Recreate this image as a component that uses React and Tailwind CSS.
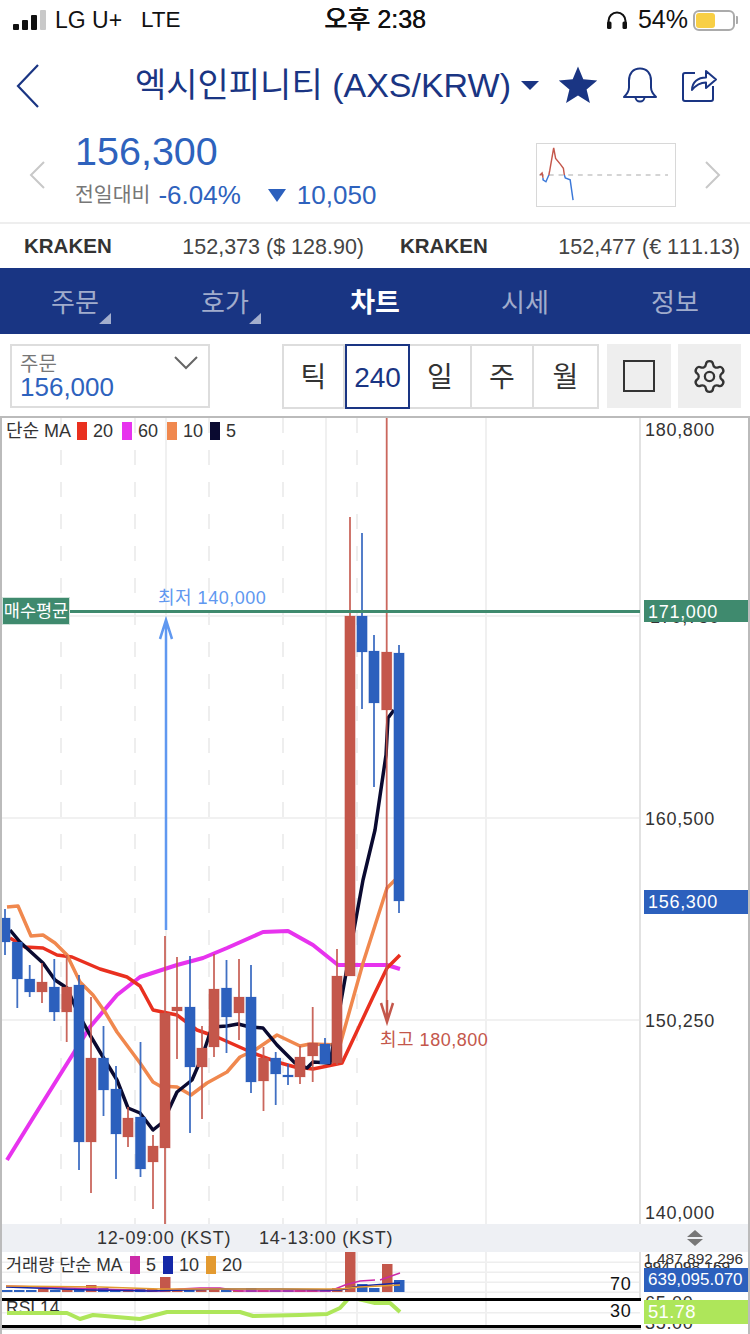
import React from "react";
import { Settings } from "lucide-react";

const NAVY = "#1a3583";
const BLUE = "#2c60bd";
const RED = "#c4574b";

// [center x, wick top, wick bottom, body top, body bottom, color]
const candles = [
  [5, 909, 955, 918, 942, BLUE],
  [17.3, 942, 1008, 942, 979, BLUE],
  [29.7, 965, 997, 979, 992, BLUE],
  [42, 963, 1003, 982, 992, RED],
  [54.3, 959, 1021, 987, 1012, BLUE],
  [66.7, 955, 1042, 987, 1012, RED],
  [79, 975, 1170, 985, 1142, BLUE],
  [91, 997, 1193, 1058, 1142, RED],
  [103.5, 1026, 1116, 1058, 1090, BLUE],
  [116, 1066, 1179, 1089, 1134, BLUE],
  [128, 1107, 1147, 1118, 1137, RED],
  [140.5, 1042, 1177, 1117, 1169, BLUE],
  [153, 1135, 1209, 1146, 1162, RED],
  [165, 936, 1224, 1013, 1148, RED],
  [177, 957, 1059, 1007, 1011, RED],
  [190, 956, 1133, 1007, 1067, BLUE],
  [202, 1026, 1119, 1048, 1067, RED],
  [214, 954, 1057, 989, 1047, RED],
  [226.5, 960, 1053, 988, 1017, BLUE],
  [239, 959, 1040, 997, 1013, RED],
  [251, 965, 1093, 997, 1082, BLUE],
  [263.5, 1047, 1111, 1058, 1081, RED],
  [275.7, 1052, 1105, 1058, 1074, BLUE],
  [288, 1064, 1085, 1075, 1077, BLUE],
  [300, 1046, 1084, 1057, 1077, RED],
  [312.7, 1007, 1082, 1043, 1056, RED],
  [325, 1038, 1064, 1044, 1064, BLUE],
  [337, 949, 1065, 976, 1063, RED],
  [350, 517, 976, 616, 976, RED],
  [362, 533, 709, 616, 652, BLUE],
  [374, 635, 787, 651, 703, BLUE],
  [386.7, 418, 1000, 652, 710, RED],
  [399, 645, 913, 653, 901, BLUE],
];

const black = "10,930 20,942 43,963 55,980 67,988 78,1013 90,1035 103,1057 117,1080 128,1108 140,1113 153,1130 163,1122 177,1092 192,1080 202,1057 212,1027 227,1026 238,1024 250,1027 263,1028 277,1045 295,1063 307,1068 313,1062 330,1063 343,990 363,880 375,830 386,755 388,718 394,710";
const orange = "7,907 18,906 31,936 43,935 55,943 67,955 80,982 93,995 105,1012 117,1032 140,1063 153,1082 160,1086 177,1087 191,1095 207,1083 227,1072 240,1057 255,1050 277,1035 300,1046 310,1044 340,1045 363,963 387,888 395,880";
const red = "10,938 25,947 43,948 57,955 72,957 100,969 127,977 140,986 153,1010 177,1015 197,1030 217,1037 253,1053 277,1062 295,1067 313,1069 342,1063 373,997 387,968 400,955";
const magenta = "7,1160 33,1118 63,1070 90,1027 117,995 140,977 177,965 203,958 227,948 263,932 288,931 313,945 338,965 387,965 400,969";
const rsi = "7,1313 67,1313 80,1319 93,1315 140,1319 167,1312 187,1312 213,1312 240,1312 253,1316 300,1315 327,1314 340,1308 350,1297 375,1303 390,1303 400,1312";

const volumes = [
  [2, 1290, BLUE], [14, 1290, BLUE], [26, 1290, BLUE], [38, 1289, RED], [50, 1290, BLUE], [62, 1289, RED],
  [74, 1288, BLUE], [86, 1285, RED], [98, 1288, BLUE], [110, 1289, BLUE], [123, 1289, RED], [135, 1289, BLUE],
  [147, 1289, RED], [160, 1277, RED], [172, 1289, RED], [184, 1290, BLUE], [196, 1290, RED], [209, 1288, RED],
  [221, 1289, BLUE], [233, 1290, RED], [246, 1288, BLUE], [258, 1290, RED], [270, 1290, BLUE], [283, 1290, BLUE],
  [295, 1290, RED], [307, 1290, RED], [320, 1290, BLUE], [332, 1288, RED], [345, 1252, RED], [357, 1284, BLUE],
  [369, 1288, BLUE], [382, 1264, RED], [394, 1280, BLUE],
];

const dashedX = [61, 135, 209, 283, 357];
const solidX = [166, 326, 486];

const StatusBar = () => (
  <div className="flex h-[40px] items-center justify-between pl-[13px] pr-[12px] text-[24px] text-[#111]">
    <div className="flex items-center">
      <div className="flex items-end gap-[3px] pb-[1px]">
        <div className="h-[6px] w-[6px] rounded-[1px] bg-[#111]" />
        <div className="h-[10px] w-[6px] rounded-[1px] bg-[#111]" />
        <div className="h-[15px] w-[6px] rounded-[1px] bg-[#111]" />
        <div className="h-[20px] w-[6px] rounded-[1px] bg-[#c9c9c9]" />
      </div>
      <span className="ml-[9px] w-[86px] text-[23px]">LG U+</span>
      <span className="text-[22.5px]">LTE</span>
    </div>
    <div className="absolute left-0 right-0 text-center text-[25px] font-medium [text-shadow:0.4px_0_0_#111]">오후 2:38</div>
    <div className="relative flex items-center">
      <svg width="22" height="18" viewBox="0 0 22 18" className="mr-[10px]">
        <path d="M2.5 14V10a8.5 8.5 0 0 1 17 0v4" fill="none" stroke="#111" strokeWidth="2" />
        <rect x="1" y="10.5" width="4.5" height="7.5" rx="1.5" fill="#111" />
        <rect x="16.5" y="10.5" width="4.5" height="7.5" rx="1.5" fill="#111" />
      </svg>
      <span className="mr-[5px] text-[25px]">54%</span>
      <div className="relative h-[21px] w-[42px] rounded-[6px] border-2 border-[#ababab] p-[1px]">
        <div className="h-full w-[19px] rounded-[3px] bg-[#f8cf45]" />
      </div>
      <div className="ml-[1px] h-[8px] w-[2px] rounded-r-[1px] bg-[#ababab]" />
    </div>
  </div>
);

const TitleBar = () => (
  <div className="relative flex h-[90px] items-center">
    <svg width="24" height="44" viewBox="0 0 24 44" className="ml-[16px] mt-[1px]">
      <path d="M22 1 2 22l20 21" fill="none" stroke={NAVY} strokeWidth="2.2" />
    </svg>
    <div className="ml-[95px] flex items-center">
      <span className="text-[34px] leading-none whitespace-nowrap text-[#1a3583]">엑시인피니티 (AXS/KRW)</span>
      <svg width="18" height="9" viewBox="0 0 18 9" className="ml-[10px]">
        <path d="M0 0h18L9 9z" fill={NAVY} />
      </svg>
    </div>
    <svg width="40" height="38" viewBox="0 0 40 38" className="ml-[19px]">
      <path d="M20 0.5l5.3 12.8 13.9 1.1-10.6 9 3.3 13.6L20 29.6 8.1 37l3.3-13.6-10.6-9 13.9-1.1z" fill={NAVY} />
    </svg>
    <svg width="36" height="37" viewBox="0 0 36 37" className="ml-[24px]">
      <path d="M18 1.5c-7 0-11 5-11 12v7c0 4-2 6.500-5 9.500h32c-3-3-5-5.500-5-9.500v-7c0-7-4-12-11-12z" fill="none" stroke={NAVY} strokeWidth="2" strokeLinejoin="round" />
      <path d="M13.500 30a4.500 4.500 0 0 0 9 0" fill="none" stroke={NAVY} strokeWidth="2" />
    </svg>
    <svg width="37" height="34" viewBox="0 0 37 34" className="ml-[23px]">
      <path d="M14 5H4a2 2 0 0 0-2 2v24a2 2 0 0 0 2 2h26a2 2 0 0 0 2-2V18" fill="none" stroke={NAVY} strokeWidth="2" />
      <path d="M11 22c0-8 6-12.500 14-12.500V3l10 8.500-10 8.500v-5.500c-6 0-10 2.500-14 7.500z" fill="none" stroke={NAVY} strokeWidth="2" strokeLinejoin="round" />
    </svg>
  </div>
);

const PriceRow = () => (
  <div className="flex h-[94px] items-center border-b-2 border-[#eeeeee]">
    <svg width="16" height="28" viewBox="0 0 16 28" className="mb-[2px] ml-[29px]">
      <path d="M15 1 2 14l13 13" fill="none" stroke="#c8c8c8" strokeWidth="2" />
    </svg>
    <div className="mb-[14px] ml-[30px] w-[461px]">
      <div className="text-[39.5px] leading-[46px] text-[#2e62bd]">156,300</div>
      <div className="mt-[6px] flex items-center text-[26px] leading-[30px] text-[#2e62bd]">
        <span className="mr-[8px] text-[20.5px] text-[#777]">전일대비</span>
        <span>-6.04%</span>
        <svg width="18" height="13" viewBox="0 0 18 13" className="ml-[27px] mr-[11px]">
          <path d="M0 0h18L9 13z" fill={BLUE} />
        </svg>
        <span>10,050</span>
      </div>
    </div>
    <svg width="140" height="64" viewBox="536 143 140 64" className="mb-[2px] border border-[#d8d8d8]">
      <path d="M537 175H670" stroke="#aaa" strokeWidth="1.2" strokeDasharray="5 5" fill="none" />
      <polyline points="538,175 540,173 541,178" fill="none" stroke={RED} strokeWidth="1.5" />
      <polyline points="541,178 541,180 544,182 547,175" fill="none" stroke="#3b78d8" strokeWidth="1.5" />
      <polyline points="547,175 548,170 552,147 554,158 559,164 562,168 563,175" fill="none" stroke={RED} strokeWidth="1.5" />
      <polyline points="563,175 564,178 569,180 572,201" fill="none" stroke="#3b78d8" strokeWidth="1.5" />
    </svg>
    <svg width="16" height="28" viewBox="0 0 16 28" className="mb-[2px] ml-[29px]">
      <path d="M1 1l13 13L1 27" fill="none" stroke="#c8c8c8" strokeWidth="2" />
    </svg>
  </div>
);

const ExchangeRow = () => (
  <div className="grid h-[44px] grid-cols-2 items-center gap-[36px] pl-[24px] pr-[10px] pt-[2px] text-[21.5px] text-[#444]">
    <div className="flex justify-between whitespace-nowrap">
      <b className="text-[20.5px] text-[#333]">KRAKEN</b>
      <span className="[font-kerning:none]">152,373 ($ 128.90)</span>
    </div>
    <div className="flex justify-between whitespace-nowrap">
      <b className="text-[20.5px] text-[#333]">KRAKEN</b>
      <span className="[font-kerning:none]">152,477 (€ 111.13)</span>
    </div>
  </div>
);

const Tab = ({ label, active, corner }) => (
  <div className="relative flex h-full items-center justify-center pt-[4px]">
    <span className={active ? "text-[27px] font-bold text-white" : "text-[26px] text-white/60"}>{label}</span>
    {corner && <div className="absolute left-[99px] top-[45px] h-[11px] w-[12px] bg-white/60 [clip-path:polygon(100%_0,100%_100%,0_100%)]" />}
  </div>
);

const TabBar = () => (
  <div className="grid h-[66px] grid-cols-5 bg-[#193583]">
    <Tab label="주문" corner />
    <Tab label="호가" corner />
    <Tab label="차트" active />
    <Tab label="시세" />
    <Tab label="정보" />
  </div>
);

const Seg = ({ label, active, width }) => (
  <div
    className={`flex items-center justify-center pt-[3px] text-[28px] ${width} ${
      active ? "h-[65px] border-2 border-[#1a3583] text-[#1a3583]" : "h-full border-r-2 border-[#dddddd] text-[#333] last:border-r-0"
    }`}
  >
    {label}
  </div>
);

const Toolbar = () => (
  <div className="flex h-[82px] items-start pl-[10px] pt-[10px]">
    <div className="relative h-[64px] w-[200px] border-2 border-[#dddddd] pl-[8px] pt-[6px]">
      <div className="text-[20px] leading-[24px] text-[#777]">주문</div>
      <div className="-mt-[1px] text-[26px] leading-[24px] text-[#2e62bd]">156,000</div>
      <svg width="24" height="14" viewBox="0 0 24 14" className="absolute right-[10px] top-[10px]">
        <path d="M1 1l11 11L23 1" fill="none" stroke="#666" strokeWidth="2" />
      </svg>
    </div>
    <div className="ml-[72px] flex h-[65px] w-[317px] items-center border-2 border-[#dddddd]">
      <Seg label="틱" width="w-[61px]" />
      <Seg label="240" active width="w-[65px]" />
      <Seg label="일" width="w-[62px]" />
      <Seg label="주" width="w-[62px]" />
      <Seg label="월" width="w-[63px]" />
    </div>
    <div className="ml-[8px] flex h-[64px] w-[64px] items-center justify-center bg-[#eeeeee] pr-[1px]">
      <div className="h-[32px] w-[32px] border-[2.5px] border-[#333]" />
    </div>
    <div className="ml-[7px] flex h-[64px] w-[63px] items-center justify-center bg-[#eeeeee]">
      <Settings size={37} strokeWidth={1.5} color="#333" />
    </div>
  </div>
);

const MainPane = () => (
  <div className="relative h-[806px] overflow-hidden text-[18px] leading-[20px] tracking-[0.7px] text-[#333] [font-kerning:none]">
    <svg viewBox="2 418 746 806" className="absolute inset-0 h-full w-full">
      {[616, 818, 1020].map((y) => (
        <rect key={y} x="2" y={y - 1} width="638" height="2" fill="#f1f1f1" />
      ))}
      {dashedX.map((x) => (
        <path key={x} d={`M${x} 418V1224`} stroke="#eeeeee" strokeWidth="2" strokeDasharray="15 17" strokeDashoffset="0" />
      ))}
      {solidX.map((x) => (
        <rect key={x} x={x - 1} y="418" width="2" height="806" fill="#f0f0f0" />
      ))}
      <rect x="639" y="418" width="2" height="806" fill="#e2e2e2" />

      <polyline points={magenta} fill="none" stroke="#e733ee" strokeWidth="4" strokeLinejoin="round" />
      <polyline points={red} fill="none" stroke="#e9301f" strokeWidth="3.500" strokeLinejoin="round" />
      <polyline points={orange} fill="none" stroke="#f0884e" strokeWidth="3.500" strokeLinejoin="round" />
      <polyline points={black} fill="none" stroke="#0a0a30" strokeWidth="3.500" strokeLinejoin="round" />

      {candles.map(([x, wt, wb, bt, bb, c]) => (
        <g key={x} fill={c}>
          <rect x={x - 0.9} y={wt} width="1.800" height={wb - wt} opacity="0.9" />
          <rect x={x - 5.2} y={bt} width="10.400" height={Math.max(bb - bt, 2)} stroke={c} strokeOpacity="0.2" strokeWidth="1" />
        </g>
      ))}

      <rect x="70" y="610" width="570" height="3" fill="#3f8a6e" />

      <path d="M166 930V620M160 639l6-19 6 19" fill="none" stroke="#6098f0" strokeWidth="2.500" />
      <path d="M387 1000V1022M381 1003l6 19 6-19" fill="none" stroke={RED} strokeWidth="2.500" />
    </svg>

    {/* legend */}
    <div className="absolute left-[4px] top-[3px] flex items-center whitespace-nowrap tracking-normal">
      <span className="w-[71px]">단순 MA</span>
      <div className="h-[18px] w-[10px] bg-[#e9301f]" />
      <span className="ml-[6px] w-[29px]">20</span>
      <div className="h-[18px] w-[10px] bg-[#e733ee]" />
      <span className="ml-[6px] w-[29px]">60</span>
      <div className="h-[18px] w-[10px] bg-[#f0884e]" />
      <span className="ml-[6px] w-[27px]">10</span>
      <div className="h-[18px] w-[10px] bg-[#0a0a30]" />
      <span className="ml-[6px]">5</span>
    </div>

    <div className="absolute left-[156px] top-[170px] whitespace-nowrap tracking-[0.5px] text-[#6098f0]">최저 140,000</div>
    <div className="absolute left-[378px] top-[612px] whitespace-nowrap tracking-[0.5px] text-[#c4574b]">최고 180,800</div>

    <div className="absolute left-0 top-[179px] flex h-[28px] w-[68px] items-center justify-center border border-[#cfe3da] bg-[#3f8a6e] text-[17.500px] tracking-normal text-white">매수평균</div>

    {/* price axis */}
    <div className="absolute left-[643px] top-[2px]">180,800</div>
    <div className="absolute left-[648px] top-[189px]">170,750</div>
    <div className="absolute left-[642px] top-[182px] h-[22px] w-[104px] bg-[#3f8a6e] pl-[4px] leading-[24px] text-white">171,000</div>
    <div className="absolute left-[643px] top-[391px]">160,500</div>
    <div className="absolute left-[642px] top-[472px] h-[24px] w-[104px] bg-[#2c60bd] pl-[4px] leading-[24px] text-white">156,300</div>
    <div className="absolute left-[643px] top-[593px]">150,250</div>
    <div className="absolute left-[643px] top-[785px]">140,000</div>
  </div>
);

const TimeBand = () => (
  <div className="relative flex h-[28px] items-center bg-[#eef0f4] text-[18px] tracking-[0.8px] text-[#333] [font-kerning:none]">
    <span className="absolute left-[95px] whitespace-nowrap">12-09:00 (KST)</span>
    <span className="absolute left-[257px] whitespace-nowrap">14-13:00 (KST)</span>
    <svg width="16" height="16" viewBox="0 0 16 16" className="absolute left-[685px]">
      <path d="M0 7 8 0l8 7zM0 9l8 7 8-7z" fill="#777" />
    </svg>
  </div>
);

const VolumePane = () => (
  <div className="relative h-[46px] overflow-hidden text-[18px] leading-[18px] text-[#333] [font-kerning:none]">
    <svg viewBox="2 1252 746 46" className="absolute inset-0 h-full w-full">
      {[1262, 1272, 1282, 1292].map((y) => (
        <rect key={y} x="2" y={y - 0.5} width="638" height="1.500" fill="#eeeeee" />
      ))}
      {[61, 135, 209, 283, 326, 357, 486].map((x) => (
        <rect key={x} x={x - 1} y="1252" width="2" height="46" fill="#f0f0f0" />
      ))}
      <rect x="639" y="1252" width="2" height="46" fill="#e2e2e2" />
      {volumes.map(([x, y, c]) => (
        <rect key={x} x={x} y={y} width="10.500" height={1292 - y} fill={c} />
      ))}
      <polyline points="6,1286 100,1289 160,1291 180,1289 200,1288 220,1288 240,1291 330,1291 345,1285 360,1281 375,1280" fill="none" stroke="#cc2aa8" strokeWidth="1.500" />
      <polyline points="6,1287 90,1290 150,1291 220,1289 280,1289 340,1290 360,1286 400,1283" fill="none" stroke="#1428a8" strokeWidth="1.500" />
      <polyline points="6,1286 100,1287 160,1289 240,1289 340,1289 360,1287 400,1285" fill="none" stroke="#e39a30" strokeWidth="1.500" />
      <polyline points="380,1280 400,1273" fill="none" stroke="#cc2aa8" strokeWidth="1.500" />
    </svg>
    <div className="absolute left-[4px] top-[4px] flex items-center whitespace-nowrap">
      <span className="w-[124px] text-[17.500px]">거래량 단순 MA</span>
      <div className="h-[18px] w-[10px] bg-[#cc2aa8]" />
      <span className="ml-[6px] w-[17px]">5</span>
      <div className="h-[18px] w-[10px] bg-[#1428a8]" />
      <span className="ml-[6px] w-[27px]">10</span>
      <div className="h-[18px] w-[10px] bg-[#e39a30]" />
      <span className="ml-[6px]">20</span>
    </div>
    <div className="absolute left-[608px] top-[23px] tracking-[0.7px] text-[#111]">70</div>
    <div className="absolute left-[642px] top-0 text-[15.500px] leading-[14px]">1,487,892,296</div>
    <div className="absolute left-[642px] top-[7px] text-[15.500px] leading-[16px]">994,098,169</div>
    <div className="absolute left-[642px] top-[16px] h-[24px] w-[104px] bg-[#2c60bd] pl-[4px] text-[17px] leading-[24px] text-white">639,095.070</div>
  </div>
);

const RsiPane = () => (
  <div className="relative h-[36px] text-[18px] leading-[18px] text-[#333] [font-kerning:none]">
    <div className="absolute left-[4px] top-[1px] text-[17.500px]">RSI 14</div>
    <svg viewBox="2 1298 746 36" className="absolute inset-0 h-full w-full">
      <rect x="2" y="1312" width="638" height="1.500" fill="#eeeeee" />
      {[61, 135, 209, 283, 326, 357, 486].map((x) => (
        <rect key={x} x={x - 1} y="1301" width="2" height="24" fill="#f0f0f0" />
      ))}
      <polyline points={rsi} fill="none" stroke="#aee65a" strokeWidth="4" strokeLinejoin="round" />
      <rect x="2" y="1298" width="639" height="3" fill="#000" />
      <rect x="2" y="1325" width="639" height="3" fill="#000" />
      <rect x="2" y="1328" width="639" height="2" fill="#cfcfcf" />
    </svg>
    <div className="absolute left-[608px] top-[4px] tracking-[0.7px] text-[#111]">30</div>
    <div className="absolute left-[643px] top-[-4px] tracking-[0.7px]">65.00</div>
    <div className="absolute left-[643px] top-[16px] tracking-[0.7px]">35.00</div>
    <div className="absolute left-[642px] top-[2px] h-[24px] w-[104px] bg-[#aee65a] pl-[4px] text-[18.500px] leading-[24px] tracking-[0.3px] text-white">51.78</div>
  </div>
);

export default function App() {
  return (
    <div className="relative h-[1334px] w-[750px] overflow-hidden bg-white [font-family:'Liberation_Sans','Noto_Sans_CJK_KR',sans-serif]">
      <StatusBar />
      <TitleBar />
      <PriceRow />
      <ExchangeRow />
      <TabBar />
      <Toolbar />
      <div className="border-x-2 border-t-2 border-[#bbbbbb]">
        <MainPane />
        <TimeBand />
        <VolumePane />
        <RsiPane />
      </div>
    </div>
  );
}
